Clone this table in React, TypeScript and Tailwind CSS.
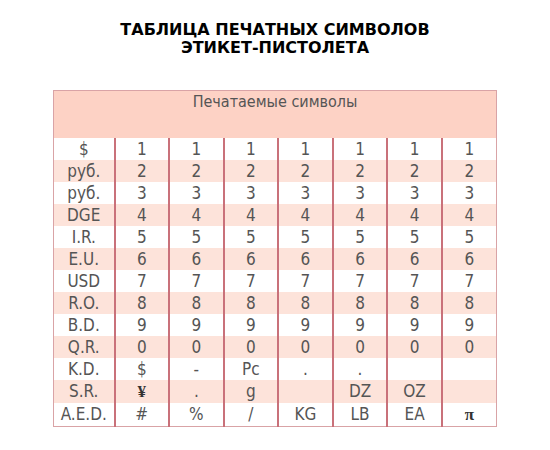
const rows: { label: string; cells: string[] }[] = [
  { label: "$", cells: ["1", "1", "1", "1", "1", "1", "1"] },
  { label: "руб.", cells: ["2", "2", "2", "2", "2", "2", "2"] },
  { label: "руб.", cells: ["3", "3", "3", "3", "3", "3", "3"] },
  { label: "DGE", cells: ["4", "4", "4", "4", "4", "4", "4"] },
  { label: "I.R.", cells: ["5", "5", "5", "5", "5", "5", "5"] },
  { label: "E.U.", cells: ["6", "6", "6", "6", "6", "6", "6"] },
  { label: "USD", cells: ["7", "7", "7", "7", "7", "7", "7"] },
  { label: "R.O.", cells: ["8", "8", "8", "8", "8", "8", "8"] },
  { label: "B.D.", cells: ["9", "9", "9", "9", "9", "9", "9"] },
  { label: "Q.R.", cells: ["0", "0", "0", "0", "0", "0", "0"] },
  { label: "K.D.", cells: ["$", "-", "Pc", ".", ".", "", ""] },
  { label: "S.R.", cells: ["¥", ".", "g", "", "DZ", "OZ", ""] },
  { label: "A.E.D.", cells: ["#", "%", "/", "KG", "LB", "EA", "π"] },
];

function Cell({ value }: { value: string }) {
  if (value === "¥" || value === "π") {
    return (
      <span className="font-['Liberation_Serif',serif] font-bold text-[#333]">
        {value}
      </span>
    );
  }
  return <>{value}</>;
}

export default function App() {
  return (
    <div className="w-[550px] h-[450px] bg-white pt-[21px]">
      <h1 className="text-center font-['DejaVu_Sans',sans-serif] font-bold text-[16px] leading-[18px] text-black">
        ТАБЛИЦА ПЕЧАТНЫХ СИМВОЛОВ
        <br />
        ЭТИКЕТ-ПИСТОЛЕТА
      </h1>

      <table className="mt-[33px] mx-auto w-[444px] border-collapse border border-[#d9a3a6] table-fixed font-['DejaVu_Sans_Condensed','DejaVu_Sans',sans-serif] [font-stretch:condensed] text-[17px] text-[#555]">
        <colgroup>
          <col className="w-[61px]" />
          {Array.from({ length: 7 }).map((_, i) => (
            <col key={i} />
          ))}
        </colgroup>
        <thead>
          <tr className="h-[47px] bg-[#fdd2c5]">
            <th
              colSpan={8}
              className="align-top pt-[1px] font-normal text-[16px] leading-[20px] text-[#555]"
            >
              Печатаемые символы
            </th>
          </tr>
        </thead>
        <tbody>
          {rows.map((row, r) => (
            <tr
              key={r}
              className={
                r % 2 === 1
                  ? "h-[22px] bg-[#fde3da]"
                  : "h-[22px] bg-white"
              }
            >
              <td className="text-center leading-[22px] p-0">{row.label}</td>
              {row.cells.map((c, i) => (
                <td
                  key={i}
                  className="text-center leading-[22px] p-0 border-l-2 border-[#c9717a]"
                >
                  <Cell value={c} />
                </td>
              ))}
            </tr>
          ))}
        </tbody>
      </table>
    </div>
  );
}
